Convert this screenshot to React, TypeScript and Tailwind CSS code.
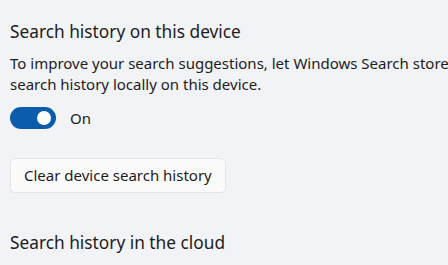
export default function App() {
  return (
    <div
      className="h-[265px] w-[448px] overflow-hidden bg-[#f2f3f7] text-[#1c1c1c]"
      style={{ fontFamily: '"Noto Sans", "Open Sans", sans-serif' }}
    >
      <div className="w-[520px] pl-[10px] pt-[19px]">
        <h2 className="text-[17.3px] leading-[26px] font-normal">Search history on this device</h2>

        <p className="mt-[8px] w-[500px] text-[15px] leading-[21px]">
          To improve your search suggestions, let Windows Search store your search history locally on this device.
        </p>

        <div className="mt-[12px] flex items-center gap-[14px]">
          <button className="relative flex h-[22px] w-[46px] items-center rounded-full bg-[#0b5cad]">
            <span className="absolute right-[5px] h-[14px] w-[14px] rounded-full bg-white" />
          </button>
          <span className="text-[15px]">On</span>
        </div>

        <button className="mt-[28px] h-[35px] rounded-[5px] border border-[#e3e3e6] bg-[#fbfbfc] px-[13px] text-[15px] text-[#1c1c1c]">
          Clear device search history
        </button>

        <h2 className="mt-[37px] text-[17.3px] leading-[26px] font-normal">Search history in the cloud</h2>
      </div>
    </div>
  )
}
